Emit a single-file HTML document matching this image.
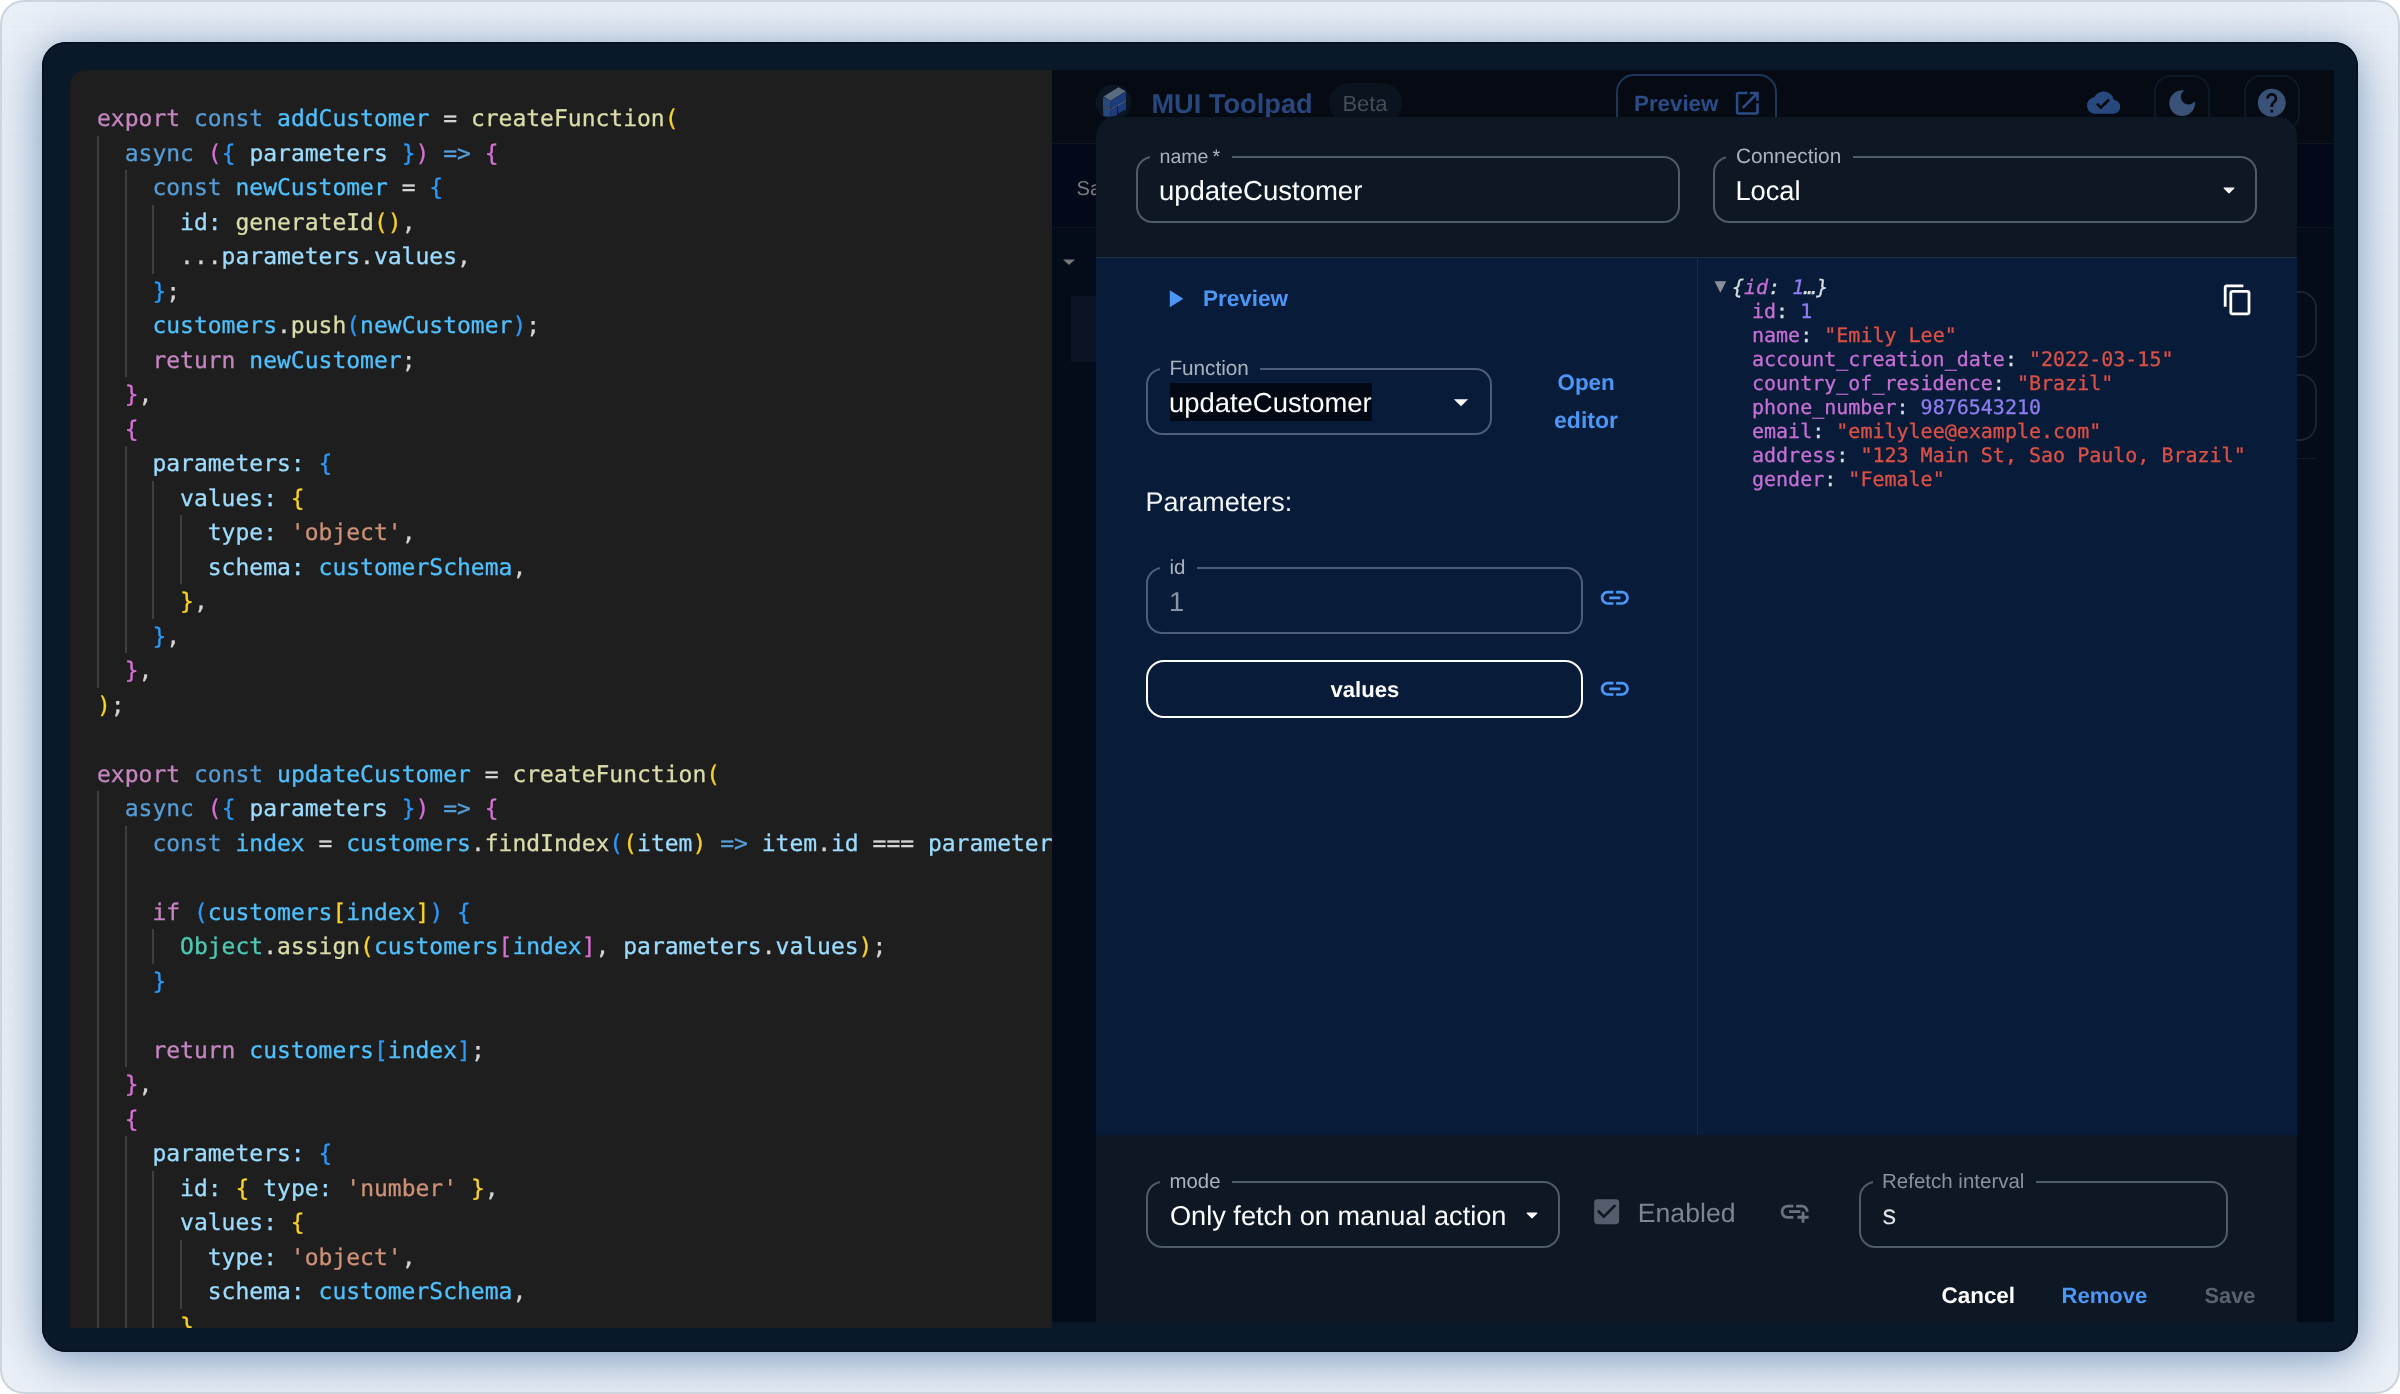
<!DOCTYPE html>
<html lang="en">
<head>
<meta charset="utf-8">
<title>MUI Toolpad – custom functions</title>
<style>
*{box-sizing:border-box;margin:0;padding:0}
html,body{width:2400px;height:1394px;overflow:hidden;background:#fff}
body{font-family:"Liberation Sans",sans-serif;position:relative;-webkit-font-smoothing:antialiased;text-rendering:geometricPrecision}
.abs{position:absolute}
/* outer card */
#card{position:absolute;left:0;top:0;width:2400px;height:1394px;border-radius:24px;border:2px solid #ccd4de;overflow:hidden;
 background-color:#ebf0f7;
 background-image:
  linear-gradient(to right,rgba(246,249,253,.3) 1px,transparent 1px),
  linear-gradient(to bottom,rgba(246,249,253,.3) 1px,transparent 1px),
  linear-gradient(180deg,#ebf0f7 0%,#eef2f8 100%);
 background-size:20px 20px,20px 20px,100% 100%;
 background-position:8px 7px,8px 7px,0 0;}
#frame{position:absolute;left:40px;top:40px;width:2316px;height:1310px;border-radius:24px;background:#0a1929;
 box-shadow:0 6px 30px rgba(90,128,172,.45),0 10px 70px rgba(90,128,172,.47),inset 0 0 0 1.5px #04101f;overflow:hidden}
/* code panel */
#code{position:absolute;left:28px;top:28px;width:982px;height:1258px;background:#1e1e1e;border-top-left-radius:16px;overflow:hidden;
 font-family:"DejaVu Sans Mono","Liberation Mono",monospace;font-size:23px;color:#d4d4d4}
#code .ln{position:relative;height:34.5px;line-height:34.5px;white-space:pre;padding-left:27px;letter-spacing:-0.002px}
#code .lines{position:absolute;left:0;top:32px;-webkit-text-stroke:0.3px currentColor}
.gd{position:absolute;width:2px;background:#3f3f3f;display:block}
.k{color:#c586c0}.b{color:#569cd6}.c{color:#4fc1ff}.v{color:#9cdcfe}.f{color:#dcdcaa}.ty{color:#4ec9b0}.s{color:#ce9178}
.g1{color:#f8d225}.g2{color:#d671d3}.g3{color:#2b99f8}
/* app panel */
#app{position:absolute;left:1010px;top:28px;width:1282px;height:1252px;background:#050a14;overflow:hidden}
.pg{position:absolute;left:-1052px;top:-70px;width:2400px;height:1394px}
.t{white-space:nowrap}
.bd{font-weight:700}
.fld{position:absolute;border:2px solid rgba(200,210,230,.36);border-radius:16.5px}
.lbl{position:absolute;font-size:20.5px;line-height:24px;color:#aab2bd;padding:0 11.5px 0 9.5px}
.val{font-size:27.3px;line-height:36px;color:#fff}
#json{font-family:"DejaVu Sans Mono","Liberation Mono",monospace;font-size:20px;color:#d0d0d0;-webkit-text-stroke:0.3px currentColor}
.jl{height:24px;line-height:24px;white-space:pre}
.j2{padding-left:39px}
.tri{color:#8b8f96;font-style:normal;font-size:19.5px;display:inline-block;width:17.5px;margin-left:1.5px;margin-right:0;position:relative;top:-2px;line-height:20px;-webkit-text-stroke:0}
.jk{color:#c670d3}.js{color:#dc5046}.jn{color:#8f7df0}.jp{color:#d8dce3}
#app,#code{will-change:transform}
</style>
</head>
<body>
<div id="card">
 <div id="frame">
  <div id="code">
   <i class="gd" style="left:27.0px;top:65.5px;height:552.0px"></i><i class="gd" style="left:27.0px;top:721.0px;height:586.5px"></i><i class="gd" style="left:54.7px;top:100.0px;height:207.0px"></i><i class="gd" style="left:54.7px;top:376.0px;height:207.0px"></i><i class="gd" style="left:54.7px;top:755.5px;height:241.5px"></i><i class="gd" style="left:54.7px;top:1066.0px;height:241.5px"></i><i class="gd" style="left:82.4px;top:134.5px;height:69.0px"></i><i class="gd" style="left:82.4px;top:410.5px;height:138.0px"></i><i class="gd" style="left:82.4px;top:859.0px;height:34.5px"></i><i class="gd" style="left:82.4px;top:1100.5px;height:172.5px"></i><i class="gd" style="left:110.1px;top:445.0px;height:69.0px"></i><i class="gd" style="left:110.1px;top:1169.5px;height:69.0px"></i>
   <div class="lines">
<div class="ln"><span class="k">export</span> <span class="b">const</span> <span class="c">addCustomer</span> = <span class="f">createFunction</span><span class="g1">(</span></div>
<div class="ln">  <span class="b">async</span> <span class="g2">(</span><span class="g3">{</span> <span class="v">parameters</span> <span class="g3">}</span><span class="g2">)</span> <span class="b">=&gt;</span> <span class="g2">{</span></div>
<div class="ln">    <span class="b">const</span> <span class="c">newCustomer</span> = <span class="g3">{</span></div>
<div class="ln">      <span class="v">id:</span> <span class="f">generateId</span><span class="g1">()</span>,</div>
<div class="ln">      ...<span class="v">parameters</span>.<span class="v">values</span>,</div>
<div class="ln">    <span class="g3">}</span>;</div>
<div class="ln">    <span class="c">customers</span>.<span class="f">push</span><span class="g3">(</span><span class="c">newCustomer</span><span class="g3">)</span>;</div>
<div class="ln">    <span class="k">return</span> <span class="c">newCustomer</span>;</div>
<div class="ln">  <span class="g2">}</span>,</div>
<div class="ln">  <span class="g2">{</span></div>
<div class="ln">    <span class="v">parameters:</span> <span class="g3">{</span></div>
<div class="ln">      <span class="v">values:</span> <span class="g1">{</span></div>
<div class="ln">        <span class="v">type:</span> <span class="s">&#x27;object&#x27;</span>,</div>
<div class="ln">        <span class="v">schema:</span> <span class="c">customerSchema</span>,</div>
<div class="ln">      <span class="g1">}</span>,</div>
<div class="ln">    <span class="g3">}</span>,</div>
<div class="ln">  <span class="g2">}</span>,</div>
<div class="ln"><span class="g1">)</span>;</div>
<div class="ln">&nbsp;</div>
<div class="ln"><span class="k">export</span> <span class="b">const</span> <span class="c">updateCustomer</span> = <span class="f">createFunction</span><span class="g1">(</span></div>
<div class="ln">  <span class="b">async</span> <span class="g2">(</span><span class="g3">{</span> <span class="v">parameters</span> <span class="g3">}</span><span class="g2">)</span> <span class="b">=&gt;</span> <span class="g2">{</span></div>
<div class="ln">    <span class="b">const</span> <span class="c">index</span> = <span class="c">customers</span>.<span class="f">findIndex</span><span class="g3">(</span><span class="g1">(</span><span class="v">item</span><span class="g1">)</span> <span class="b">=&gt;</span> <span class="v">item</span>.<span class="v">id</span> === <span class="v">parameters</span>.<span class="v">id</span><span class="g3">)</span>;</div>
<div class="ln">&nbsp;</div>
<div class="ln">    <span class="k">if</span> <span class="g3">(</span><span class="c">customers</span><span class="g1">[</span><span class="c">index</span><span class="g1">]</span><span class="g3">)</span> <span class="g3">{</span></div>
<div class="ln">      <span class="ty">Object</span>.<span class="f">assign</span><span class="g1">(</span><span class="c">customers</span><span class="g2">[</span><span class="c">index</span><span class="g2">]</span>, <span class="v">parameters</span>.<span class="v">values</span><span class="g1">)</span>;</div>
<div class="ln">    <span class="g3">}</span></div>
<div class="ln">&nbsp;</div>
<div class="ln">    <span class="k">return</span> <span class="c">customers</span><span class="g3">[</span><span class="c">index</span><span class="g3">]</span>;</div>
<div class="ln">  <span class="g2">}</span>,</div>
<div class="ln">  <span class="g2">{</span></div>
<div class="ln">    <span class="v">parameters:</span> <span class="g3">{</span></div>
<div class="ln">      <span class="v">id:</span> <span class="g1">{</span> <span class="v">type:</span> <span class="s">&#x27;number&#x27;</span> <span class="g1">}</span>,</div>
<div class="ln">      <span class="v">values:</span> <span class="g1">{</span></div>
<div class="ln">        <span class="v">type:</span> <span class="s">&#x27;object&#x27;</span>,</div>
<div class="ln">        <span class="v">schema:</span> <span class="c">customerSchema</span>,</div>
<div class="ln">      <span class="g1">}</span>,</div>
<div class="ln">    <span class="g3">}</span>,</div>
   </div>
  </div>
  <div id="app">
<div class="pg">
 <!-- background app (dimmed) -->
 <div class="abs" style="left:1052px;top:70px;width:1281px;height:73px;background:#060a13"></div>
 <div class="abs" style="left:1052px;top:143px;width:1281px;height:1px;background:#0d1522"></div>
 <div class="abs" style="left:1052px;top:144px;width:1281px;height:83px;background:#030918"></div>
 <div class="abs" style="left:1052px;top:227px;width:1281px;height:1px;background:#0b1424"></div>
 <div class="abs" style="left:1052px;top:228px;width:1281px;height:1100px;background:#040b19"></div>
 <div class="abs" style="left:1071px;top:296px;width:60px;height:66px;background:#0a1423"></div>
 <div class="abs t" id="t-sa" style="left:1076.6px;top:173.2px;font-size:20.2px;line-height:32px;color:#7b7b7d">Sa</div>
 <svg class="abs" style="left:1056.9px;top:250px" width="24" height="24" viewBox="0 0 24 24"><path fill="#787878" d="M6 9.5l6 5.5 6-5.5z"/></svg>
 <!-- faint widgets right of dialog -->
 <div class="abs" style="left:2256.7px;top:290.5px;width:60px;height:67px;border:2px solid #1b2331;border-radius:17px"></div>
 <div class="abs" style="left:2256.7px;top:374px;width:60px;height:67px;border:2px solid #1b2331;border-radius:17px"></div>
 <div class="abs" style="left:2256.7px;top:457.5px;width:60px;height:1.5px;background:#121a27"></div>

 <!-- app bar -->
 <svg class="abs" style="left:1095px;top:83px" width="38" height="38" viewBox="0 0 38 38">
  <circle cx="18.4" cy="19.4" r="17.8" fill="#0c1523"/>
  <polygon points="8.5,13.4 23.5,4.2 30.8,8.3 15.3,17.9" fill="#5a6b80"/>
  <polygon points="8.0,14.0 15.3,18.2 15.3,26.1 8.0,22.5" fill="#27497c"/>
  <polygon points="8.0,24.1 15.3,27.5 15.3,33.8 8.3,33.0" fill="#27497c"/>
  <polygon points="15.3,18.2 31.0,8.7 31.0,17.4 15.3,26.1" fill="#1c3c7c"/>
  <polygon points="15.3,27.5 22.0,23.7 22.0,32.4 15.3,33.8" fill="#1c3c7c"/>
  <polygon points="22.8,22.5 31.0,18.2 31.0,26.5 22.8,30.4" fill="#1c3c7c"/>
  <polyline points="8.0,23.3 15.3,26.8 31.0,17.8" fill="none" stroke="#56657a" stroke-width="1"/>
 </svg>
 <div class="abs t bd" id="t-mui" style="left:1151.4px;top:86.5px;line-height:34px;color:#27477d;font-size:27.22px">MUI Toolpad</div>
 <div class="abs" style="left:1329px;top:83px;width:73px;height:40px;border-radius:20px;background:#0b131f"></div>
 <div class="abs t" id="t-beta" style="left:1342.4px;top:88.9px;line-height:30px;color:#454d59;font-size:21.98px">Beta</div>
 <div class="abs" style="left:1615.8px;top:73.75px;width:161.7px;height:70px;border:2px solid #1d3559;border-radius:18px"></div>
 <div class="abs t bd" id="t-prev0" style="left:1634.0px;top:89.0px;line-height:30px;color:#2a4d88;font-size:22.32px">Preview</div>
 <svg class="abs" style="left:1732.4px;top:88px" width="30.6" height="30.6" viewBox="0 0 24 24"><path fill="#2a4d88" d="M19 19H5V5h7V3H5c-1.11 0-2 .9-2 2v14c0 1.1.89 2 2 2h14c1.1 0 2-.9 2-2v-7h-2v7zM14 3v2h3.59l-9.83 9.83 1.41 1.41L19 6.41V10h2V3h-7z"/></svg>
 <svg class="abs" style="left:2086.8px;top:86.05px" width="33.3" height="33.3" viewBox="0 0 24 24"><path fill="#27497e" d="M19.35 10.04C18.67 6.59 15.64 4 12 4 9.11 4 6.6 5.64 5.35 8.04 2.34 8.36 0 10.91 0 14c0 3.31 2.69 6 6 6h13c2.76 0 5-2.24 5-5 0-2.64-2.05-4.78-4.65-4.96zM10 17l-3.5-3.5 1.41-1.41L10 14.17 15.18 9l1.41 1.41L10 17z"/></svg>
 <div class="abs" style="left:2153.9px;top:75.3px;width:56px;height:56px;border:2px solid #0e1928;border-radius:17px"></div>
 <svg class="abs" style="left:2164.8px;top:85.8px" width="34.3" height="34.3" viewBox="0 0 24 24"><path fill="#3a5277" d="M12 3c-4.97 0-9 4.03-9 9s4.03 9 9 9 9-4.03 9-9c0-.46-.04-.92-.1-1.36-.98 1.37-2.58 2.26-4.4 2.26-2.98 0-5.4-2.42-5.4-5.4 0-1.81.89-3.42 2.26-4.4-.44-.06-.9-.1-1.36-.1z"/></svg>
 <div class="abs" style="left:2244px;top:75.3px;width:56px;height:56px;border:2px solid #0e1928;border-radius:17px"></div>
 <svg class="abs" style="left:2255.2px;top:86.1px" width="33.6" height="33.6" viewBox="0 0 24 24"><path fill="#3a5277" d="M12 2C6.48 2 2 6.48 2 12s4.48 10 10 10 10-4.48 10-10S17.52 2 12 2zm1 17h-2v-2h2v2zm2.07-7.75l-.9.92C13.45 12.9 13 13.5 13 15h-2v-.5c0-1.1.45-2.1 1.17-2.83l1.24-1.26c.37-.36.59-.86.59-1.41 0-1.1-.9-2-2-2s-2 .9-2 2H8c0-2.21 1.79-4 4-4s4 1.79 4 4c0 .88-.36 1.68-.93 2.25z"/></svg>

 <!-- dialog -->
 <div id="dlg" class="abs" style="left:1096px;top:117px;width:1201px;height:1260px;border-radius:19px;background:#0e1825;overflow:hidden">
  <div class="abs" style="left:0;top:140px;width:1201px;height:878px;background:#081c3a;border-top:1.5px solid #1c2a42"></div>
  <div class="abs" style="left:600.5px;top:141px;width:1.5px;height:877px;background:#1e2a3d"></div>
 </div>
 <!-- dialog header fields -->
 <div class="fld" style="left:1136.4px;top:156.4px;width:543.4px;height:66.7px"></div>
 <div class="lbl t" id="t-name-lbl" style="left:1150.0px;top:144.5px;background:#0e1825;font-size:19.6px">name&thinsp;*</div>
 <div class="abs t val" id="t-name-val" style="left:1158.9px;top:172.5px;font-size:27.53px">updateCustomer</div>
 <div class="fld" style="left:1713.2px;top:156.4px;width:543.8px;height:66.7px"></div>
 <div class="lbl t" id="t-conn-lbl" style="left:1726.4px;top:145.1px;background:#0e1825;font-size:20.84px">Connection</div>
 <div class="abs t val" id="t-conn-val" style="left:1735.4px;top:172.6px;font-size:27.26px">Local</div>
 <svg class="abs" style="left:2215.8px;top:176.8px" width="26" height="26" viewBox="0 0 24 24"><path fill="#fff" stroke="#fff" stroke-width="1" stroke-linejoin="round" d="M7.5 10.3l4.5 4.4 4.5-4.4z"/></svg>

 <!-- query editor left pane -->
 <svg class="abs" style="left:1159.6px;top:283.85px" width="29.5" height="29.5" viewBox="0 0 24 24"><path fill="#4c97f5" d="M8 5v14l11-7z"/></svg>
 <div class="abs t bd" id="t-prev" style="left:1203.0px;top:284.1px;line-height:30px;color:#4c97f5;font-size:22.53px">Preview</div>
 <div class="fld" style="left:1146.3px;top:368.1px;width:345.7px;height:67px"></div>
 <div class="lbl t" id="t-fn-lbl" style="left:1159.9px;top:356.8px;background:#081c3a;font-size:20.73px">Function</div>
 <div class="abs" style="left:1169.7px;top:382.5px;width:202.4px;height:38.1px;background:#030914"></div>
 <div class="abs t val" id="t-fn-val" style="left:1168.9px;top:384.6px;font-size:27.45px">updateCustomer</div>
 <svg class="abs" style="left:1443.6px;top:384.7px" width="34" height="34" viewBox="0 0 24 24"><path fill="#fff" d="M7 10l5 5 5-5z"/></svg>
 <div class="abs t bd" id="t-open" style="left:1557.5px;top:368.0px;line-height:30px;color:#4c97f5;font-size:22.41px">Open</div>
 <div class="abs t bd" id="t-editor" style="left:1554.0px;top:405.4px;line-height:30px;color:#4c97f5;font-size:23.04px">editor</div>
 <div class="abs t" id="t-params" style="left:1145.5px;top:484.3px;line-height:36px;color:#f2f5f9;font-size:26.93px">Parameters:</div>
 <div class="fld" style="left:1146.3px;top:567.4px;width:436.8px;height:67px"></div>
 <div class="lbl t" id="t-id-lbl" style="left:1159.9px;top:555.9px;background:#081c3a;font-size:20.5px">id</div>
 <div class="abs t val" id="t-id-val" style="left:1169.0px;top:583.8px;color:#8a94a4;font-size:27.3px">1</div>
 <svg class="abs" style="left:1598.1px;top:580.9px" width="33.6" height="33.6" viewBox="0 0 24 24"><path fill="#4c97f5" d="M3.9 12c0-1.71 1.39-3.1 3.1-3.1h4V7H7c-2.76 0-5 2.24-5 5s2.24 5 5 5h4v-1.9H7c-1.71 0-3.1-1.39-3.1-3.1zM8 13h8v-2H8v2zm9-6h-4v1.9h4c1.71 0 3.1 1.39 3.1 3.1s-1.39 3.1-3.1 3.1h-4V17h4c2.76 0 5-2.24 5-5s-2.24-5-5-5z"/></svg>
 <div class="abs" style="left:1146.3px;top:660.3px;width:437px;height:58px;border:2.5px solid #fff;border-radius:18px"></div>
 <div class="abs t bd" id="t-values" style="left:1330.5px;top:675.1px;line-height:30px;color:#fff;font-size:22.07px">values</div>
 <svg class="abs" style="left:1598.1px;top:672.45px" width="33.6" height="33.6" viewBox="0 0 24 24"><path fill="#4c97f5" d="M3.9 12c0-1.71 1.39-3.1 3.1-3.1h4V7H7c-2.76 0-5 2.24-5 5s2.24 5 5 5h4v-1.9H7c-1.71 0-3.1-1.39-3.1-3.1zM8 13h8v-2H8v2zm9-6h-4v1.9h4c1.71 0 3.1 1.39 3.1 3.1s-1.39 3.1-3.1 3.1h-4V17h4c2.76 0 5-2.24 5-5s-2.24-5-5-5z"/></svg>

 <!-- JSON inspector -->
 <div id="json" class="abs" style="left:1713px;top:275px">
  <div class="jl" style="font-style:italic"><span class="tri">&#9660;</span><span class="jp">{</span><span class="jk">id</span><span class="jp">: </span><span class="jn">1</span><span class="jp">…}</span></div>
  <div class="jl j2"><span class="jk">id</span><span class="jp">: </span><span class="jn">1</span></div>
  <div class="jl j2"><span class="jk">name</span><span class="jp">: </span><span class="js">"Emily Lee"</span></div>
  <div class="jl j2"><span class="jk">account_creation_date</span><span class="jp">: </span><span class="js">"2022-03-15"</span></div>
  <div class="jl j2"><span class="jk">country_of_residence</span><span class="jp">: </span><span class="js">"Brazil"</span></div>
  <div class="jl j2"><span class="jk">phone_number</span><span class="jp">: </span><span class="jn">9876543210</span></div>
  <div class="jl j2"><span class="jk">email</span><span class="jp">: </span><span class="js">"emilylee@example.com"</span></div>
  <div class="jl j2"><span class="jk">address</span><span class="jp">: </span><span class="js">"123 Main St, Sao Paulo, Brazil"</span></div>
  <div class="jl j2"><span class="jk">gender</span><span class="jp">: </span><span class="js">"Female"</span></div>
 </div>
 <svg class="abs" style="left:2221.3px;top:283.4px" width="33.6" height="33.6" viewBox="0 0 24 24"><path fill="#fff" d="M16 1H4c-1.1 0-2 .9-2 2v14h2V3h12V1zm3 4H8c-1.1 0-2 .9-2 2v14c0 1.1.9 2 2 2h11c1.1 0 2-.9 2-2V7c0-1.1-.9-2-2-2zm0 16H8V7h11v14z"/></svg>

 <!-- footer -->
 <div class="fld" style="left:1146.3px;top:1181.2px;width:413.4px;height:66.8px"></div>
 <div class="lbl t" id="t-mode-lbl" style="left:1160.0px;top:1169.7px;background:#0e1825;font-size:20.4px">mode</div>
 <div class="abs t val" id="t-mode-val" style="left:1170.0px;top:1198.3px;font-size:27.15px">Only fetch on manual action</div>
 <svg class="abs" style="left:1518.7px;top:1201.7px" width="26" height="26" viewBox="0 0 24 24"><path fill="#fff" stroke="#fff" stroke-width="1" stroke-linejoin="round" d="M7.5 10.3l4.5 4.4 4.5-4.4z"/></svg>
 <svg class="abs" style="left:1590px;top:1194.7px" width="33.3" height="33.3" viewBox="0 0 24 24"><path fill="#555c6b" d="M19 3H5c-1.11 0-2 .9-2 2v14c0 1.1.89 2 2 2h14c1.11 0 2-.9 2-2V5c0-1.1-.89-2-2-2zm-9 14l-5-5 1.41-1.41L10 14.17l7.590-7.590L19 8l-9 9z"/></svg>
 <div class="abs t" id="t-enabled" style="left:1637.8px;top:1194.5px;line-height:36px;color:#7d8591;font-size:26.64px">Enabled</div>
 <svg class="abs" style="left:1777.7px;top:1194.5px" width="33.4" height="33.4" viewBox="0 0 24 24"><path fill="#6b7380" d="M8 11h8v2H8zm12.1 1H22c0-2.76-2.24-5-5-5h-4v1.9h4c1.71 0 3.1 1.39 3.1 3.1zM3.9 12c0-1.71 1.39-3.1 3.1-3.1h4V7H7c-2.76 0-5 2.24-5 5s2.24 5 5 5h4v-1.900H7c-1.71 0-3.1-1.39-3.1-3.1zM19 12h-2v3h-3v2h3v3h2v-3h3v-2h-3z"/></svg>
 <div class="fld" style="left:1859.2px;top:1180.8px;width:369.3px;height:66.9px"></div>
 <div class="lbl t" id="t-ref-lbl" style="color:#8a929e;left:1872.5px;top:1169.9px;background:#0e1825;font-size:20.5px">Refetch interval</div>
 <div class="abs t val" id="t-ref-val" style="color:#e0e3e8;left:1882.5px;top:1196.7px;font-size:27.3px">s</div>
 <div class="abs t bd" id="t-cancel" style="left:1941.5px;top:1281.2px;line-height:30px;color:#fff;font-size:22.45px">Cancel</div>
 <div class="abs t bd" id="t-remove" style="left:2061.5px;top:1281.4px;line-height:30px;color:#4c97f5;font-size:22.03px">Remove</div>
 <div class="abs t bd" id="t-save" style="left:2204.5px;top:1281.4px;line-height:30px;color:#596270;font-size:21.84px">Save</div>

</div>

  </div>
 </div>
</div>
</body>
</html>
